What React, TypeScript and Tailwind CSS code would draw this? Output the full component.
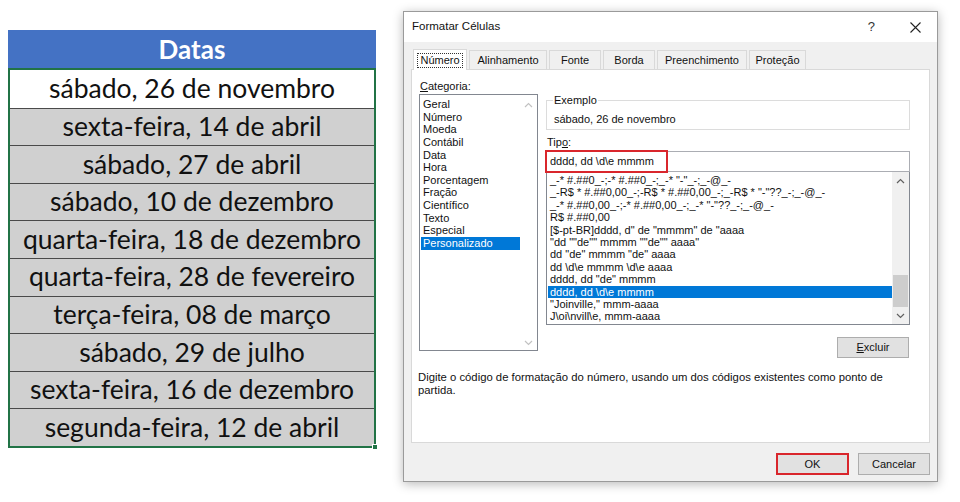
import React from "react";

// Excel sheet on the left, "Formatar Células" dialog on the right.

const dates = [
  "sábado, 26 de novembro",
  "sexta-feira, 14 de abril",
  "sábado, 27 de abril",
  "sábado, 10 de dezembro",
  "quarta-feira, 18 de dezembro",
  "quarta-feira, 28 de fevereiro",
  "terça-feira, 08 de março",
  "sábado, 29 de julho",
  "sexta-feira, 16 de dezembro",
  "segunda-feira, 12 de abril",
];

const categories = [
  "Geral",
  "Número",
  "Moeda",
  "Contábil",
  "Data",
  "Hora",
  "Porcentagem",
  "Fração",
  "Científico",
  "Texto",
  "Especial",
  "Personalizado",
];

const formats = [
  '_-* #.##0_-;-* #.##0_-;_-* "-"_-;_-@_-',
  '_-R$ * #.##0,00_-;-R$ * #.##0,00_-;_-R$ * "-"??_-;_-@_-',
  '_-* #.##0,00_-;-* #.##0,00_-;_-* "-"??_-;_-@_-',
  "R$ #.##0,00",
  '[$-pt-BR]dddd, d" de "mmmm" de "aaaa',
  '"dd ""de"" mmmm ""de"" aaaa"',
  'dd "de" mmmm "de" aaaa',
  "dd \\d\\e mmmm \\d\\e aaaa",
  'dddd, dd "de" mmmm',
  "dddd, dd \\d\\e mmmm",
  '"Joinville," mmm-aaaa',
  "J\\oi\\nvill\\e, mmm-aaaa",
];

const tabs = [
  { label: "Número", w: "w-[54px]" },
  { label: "Alinhamento", w: "w-[78px]" },
  { label: "Fonte", w: "w-[52px]" },
  { label: "Borda", w: "w-[52px]" },
  { label: "Preenchimento", w: "w-[90px]" },
  { label: "Proteção", w: "w-[57px]" },
];

function Chevron({ up }: { up?: boolean }) {
  return (
    <svg width="9" height="6" viewBox="0 0 9 6">
      <polyline
        points={up ? "1,5 4.5,1.5 8,5" : "1,1 4.5,4.5 8,1"}
        fill="none"
        stroke="currentColor"
        strokeWidth="1.2"
      />
    </svg>
  );
}

function Sheet() {
  return (
    <div className="ml-[8px] mt-[30px] w-[368px] font-['Lato',sans-serif] shrink-0">
      <div className="h-[38px] bg-[#4472c4] text-white font-bold text-[26px] flex items-center justify-center">
        Datas
      </div>
      <div className="relative border-2 border-[#217346]">
        {dates.map((d, i) => (
          <div
            key={d}
            className={`h-[37.6px] flex items-center justify-center text-[26.5px] text-[#111] ${
              i === 0 ? "bg-white" : "bg-[#d0d0d0] border-t border-[#4a4a4a]"
            }`}
          >
            {d}
          </div>
        ))}
        <div className="absolute -right-[4px] -bottom-[4px] w-[6px] h-[6px] bg-[#217346] border border-white" />
      </div>
    </div>
  );
}

function Dialog() {
  return (
    <div className="ml-[27px] mt-[11px] w-[535px] h-[471px] shrink-0 border border-[#9a9a9a] bg-[#f0f0f0] shadow-[0_2px_10px_rgba(0,0,0,0.28)] flex flex-col font-['Liberation_Sans',Arial,sans-serif] text-[11px] text-[#111]">
      {/* title bar */}
      <div className="h-[30px] bg-white flex items-center pl-[8px] pr-[16px] text-[11.5px]">
        <span>Formatar Células</span>
        <span className="ml-auto mr-[35px] text-[13px] text-[#333]">?</span>
        <svg width="11" height="11" viewBox="0 0 11 11">
          <path d="M0.5 0.5 L10.5 10.5 M10.5 0.5 L0.5 10.5" stroke="#222" strokeWidth="1.1" />
        </svg>
      </div>

      <div className="flex-1 px-[7px] pt-[8px] flex flex-col">
        {/* tabs */}
        <div className="flex items-end h-[19px] pl-[2px] gap-[2px]">
          {tabs.map((t, i) =>
            i === 0 ? (
              <div
                key={t.label}
                className={`${t.w} h-[21px] -mb-px relative z-10 bg-white border border-b-0 border-[#d9d9d9] flex items-center justify-center`}
              >
                <span className="border border-dotted border-[#333] px-[2px] leading-[13px]">{t.label}</span>
              </div>
            ) : (
              <div
                key={t.label}
                className={`${t.w} h-[19px] bg-[#f0f0f0] border border-b-0 border-[#d9d9d9] flex items-center justify-center`}
              >
                {t.label}
              </div>
            )
          )}
        </div>

        {/* panel */}
        <div className="h-[374px] bg-white border border-[#d9d9d9]">
          <div className="flex pt-[9px] pl-[7px]">
            {/* category */}
            <div className="w-[119px]">
              <div className="h-[15px] leading-[15px] pl-[1px]">
                <span className="underline">C</span>ategoria:
              </div>
              <div className="h-[257px] border border-[#828790] flex">
                <div className="flex-1 pt-[3px] pl-[1px]">
                  {categories.map((c) => (
                    <div
                      key={c}
                      className={`h-[12.64px] leading-[12.64px] pl-[2px] ${
                        c === "Personalizado" ? "bg-[#0078d7] text-white" : ""
                      }`}
                    >
                      {c}
                    </div>
                  ))}
                </div>
                <div className="w-[17px] flex flex-col items-center justify-between pt-[7px] pb-[4px] text-[#c2c2c2]">
                  <Chevron up />
                  <Chevron />
                </div>
              </div>
            </div>

            {/* type */}
            <div className="ml-[8px] w-[364px] mt-[14px] flex flex-col">
              <fieldset className="border border-[#dcdcdc] px-[6px] pb-[3px]">
                <legend className="leading-[15px] px-[1px]">Exemplo</legend>
                <div className="leading-[14px] pt-[4px] pl-[1px]">sábado, 26 de novembro</div>
              </fieldset>

              <div className="mt-[5px] h-[15px] leading-[15px] pl-[1px]">
                Tip<span className="underline">o</span>:
              </div>
              <div className="relative mt-[1px] h-[21px] border border-[#abadb3] flex items-center pl-[3px]">
                {"dddd, dd \\d\\e mmmm"}
                <div className="absolute -left-[2px] -top-[2px] w-[123px] h-[23px] border-2 border-[#d9262c]" />
              </div>

              <div className="h-[154px] border border-[#828790] border-t-[#abadb3] -mt-px flex">
                <div className="flex-1 pt-[2px] pl-[1px] min-w-0">
                  {formats.map((f, i) => (
                    <div
                      key={f}
                      className={`h-[12.4px] leading-[12.4px] pl-[2px] whitespace-nowrap ${
                        i === 9 ? "bg-[#0078d7] text-white" : ""
                      }`}
                    >
                      {f}
                    </div>
                  ))}
                </div>
                <div className="w-[17px] bg-[#f0f0f0] flex flex-col text-[#606060]">
                  <div className="h-[17px] flex items-center justify-center">
                    <Chevron up />
                  </div>
                  <div className="flex-1 flex flex-col justify-end px-[1px]">
                    <div className="h-[32px] bg-[#cdcdcd]" />
                  </div>
                  <div className="h-[17px] flex items-center justify-center">
                    <Chevron />
                  </div>
                </div>
              </div>

              <div className="mt-[12px] self-end mr-[1px] w-[72px] h-[21px] bg-[#e1e1e1] border border-[#adadad] flex items-center justify-center">
                <span>
                  <span className="underline">E</span>xcluir
                </span>
              </div>
            </div>
          </div>

          <p className="mt-[13px] pl-[6px] leading-[12.5px] text-[11.3px]">
            Digite o código de formatação do número, usando um dos códigos existentes como ponto de
            <br />
            partida.
          </p>
        </div>

        {/* buttons */}
        <div className="mt-[10px] flex justify-end gap-[9px]">
          <div className="w-[73px] h-[22px] bg-[#e1e1e1] border-2 border-[#d9262c] flex items-center justify-center">
            OK
          </div>
          <div className="w-[72px] h-[22px] bg-[#e1e1e1] border border-[#adadad] flex items-center justify-center">
            Cancelar
          </div>
        </div>
      </div>
    </div>
  );
}

export default function App() {
  return (
    <div className="w-[960px] h-[502px] bg-white flex items-start overflow-hidden">
      <Sheet />
      <Dialog />
    </div>
  );
}
